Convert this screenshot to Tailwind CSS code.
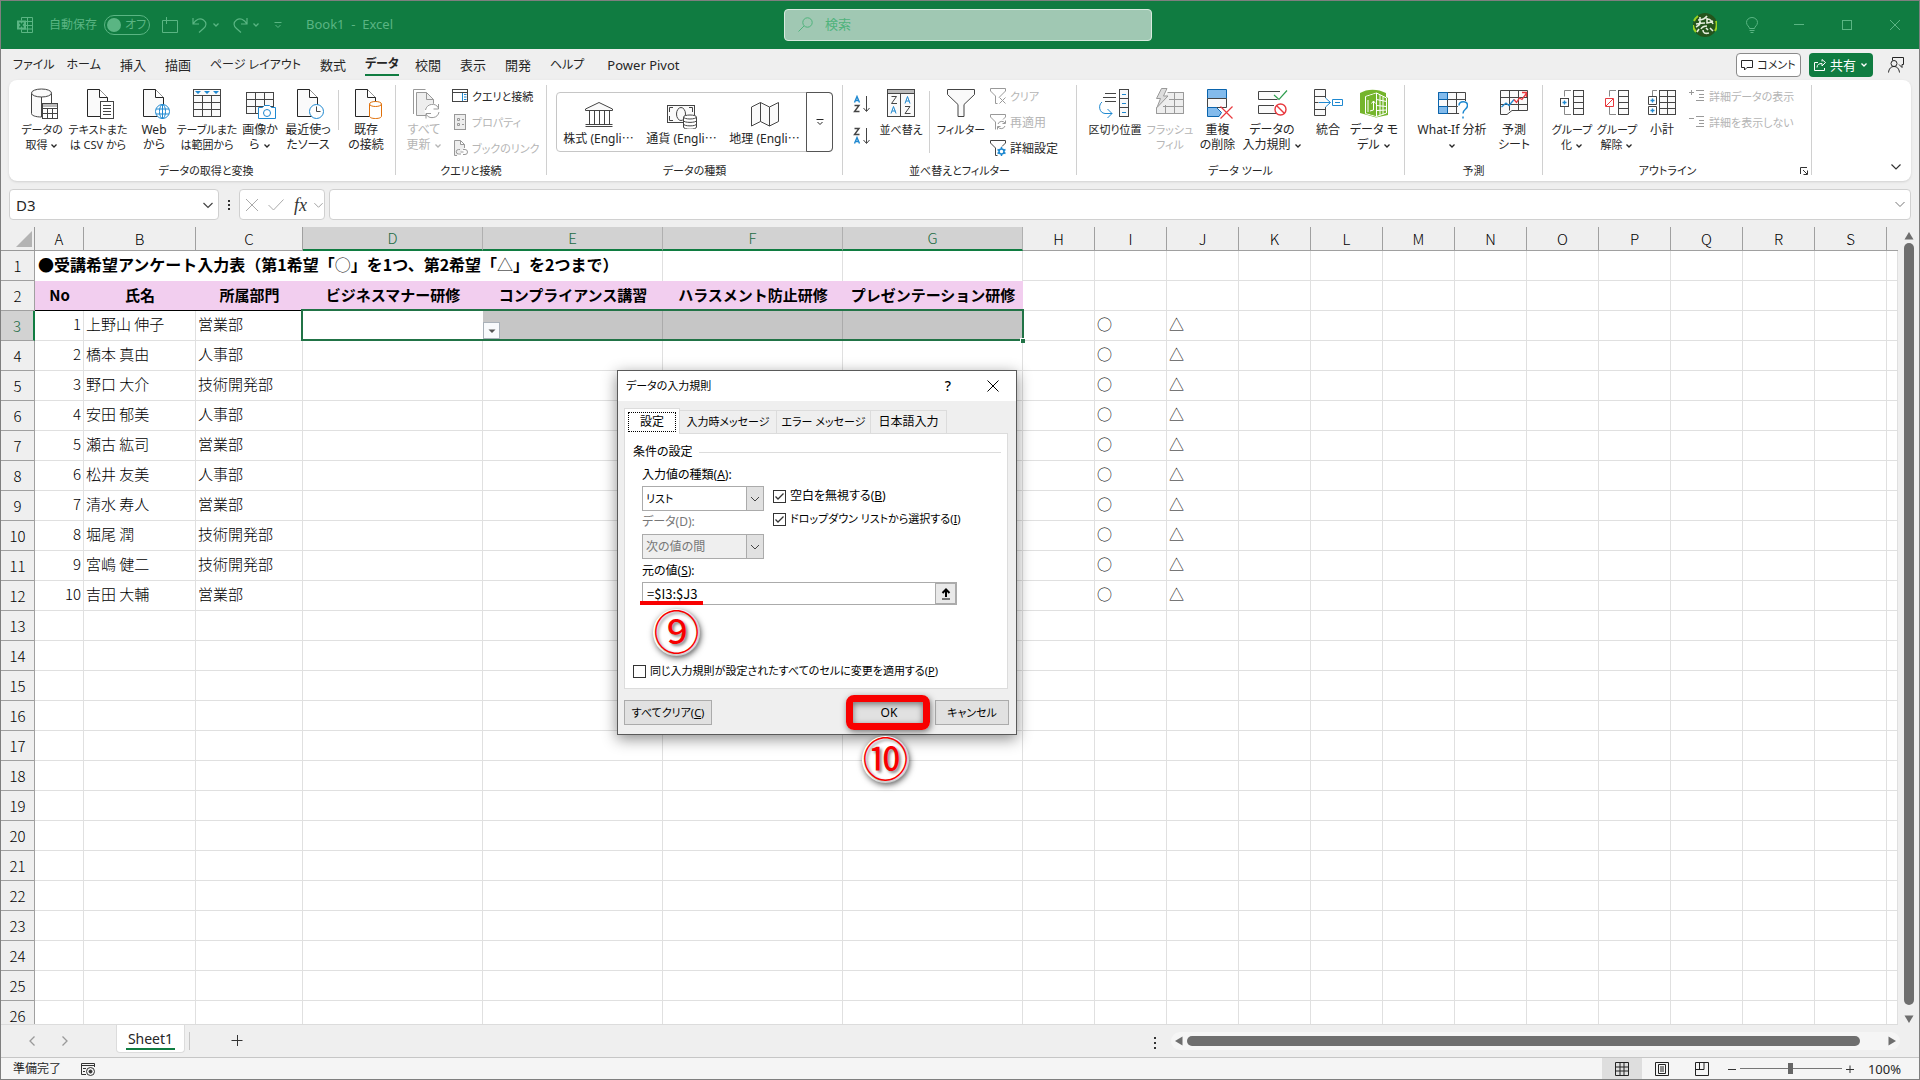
<!DOCTYPE html>
<html lang="ja">
<head>
    <meta charset="UTF-8">
    <meta name="viewport" content="width=device-width, initial-scale=1.0">
    <title>Book1 - Excel</title>
    <script src="https://cdn.jsdelivr.net/npm/@tailwindcss/browser@4"></script>
</head>
<body class="flex h-screen flex-col overflow-hidden border border-[#7f7f7f] bg-[#efefef] font-['Noto_Sans','Noto_Sans_CJK_JP',sans-serif] text-xs text-[#262626] [font-feature-settings:'palt']">

    <!-- Shared icon shapes -->
    <svg class="hidden" aria-hidden="true">
        <symbol id="chev" viewBox="0 0 8 8"><path d="M1.5 2.5 4 5l2.5-2.5" fill="none" stroke="currentColor" stroke-width="1.3"/></symbol>
        <symbol id="doc" viewBox="0 0 32 32"><path d="M5.5 1.5h12l8 8v19h-20z" fill="#fafafa" stroke="currentColor"/><path d="M17.5 1.5v8h8" fill="#fff" stroke="currentColor"/></symbol>
    </svg>

    <!-- Title bar -->
    <header class="flex h-12 shrink-0 items-center bg-[#107c41] text-[#5ab583]">
        <div class="flex flex-1 items-center pl-4">
            <svg class="h-4 w-4" viewBox="0 0 16 16" fill="none" stroke="currentColor"><path d="M4.500 3.500v-3h11v15h-11v-3M10.500.5v15M4 4.500h11.500M8 8.500h7.500M4 12h11.500"/><rect x="0" y="3.500" width="9" height="9" fill="currentColor" stroke="none"/><path d="m2.500 5.500 4 5m0-5-4 5" stroke="#107c41" stroke-width="1.500"/></svg>
            <span class="ml-4 w-12 whitespace-nowrap">自動保存</span>
            <button type="button" aria-label="自動保存 オフ" class="ml-[7px] flex h-5 w-[46px] items-center gap-1 rounded-full border border-current px-0.5"><span class="h-3.5 w-3.5 rounded-full bg-current"></span><span>オフ</span></button>
            <button type="button" aria-label="新しいウィンドウ" class="ml-3"><svg class="h-4 w-4" viewBox="0 0 16 16" fill="none" stroke="currentColor"><path d="M8 3.500h7.500v12H.5v-12H2M4.500 0v7M1 3.500h7"/></svg></button>
            <button type="button" aria-label="元に戻す" class="ml-3.5 flex items-center gap-1"><svg class="h-4 w-4" viewBox="0 0 16 16" fill="none" stroke="currentColor" stroke-width="1.200"><path d="M1 1v6h6M1 7C4 2 8 .5 11.500 3s3 6 0 8.500L7 15.500"/></svg><svg class="h-2 w-2"><use href="#chev"/></svg></button>
            <button type="button" aria-label="やり直し" class="ml-3 flex items-center gap-1"><svg class="h-4 w-4" viewBox="0 0 16 16" fill="none" stroke="currentColor" stroke-width="1.200"><path d="M15 1v6H9M15 7C12 2 8 .5 4.500 3s-3 6 0 8.500L9 15.500"/></svg><svg class="h-2 w-2"><use href="#chev"/></svg></button>
            <button type="button" aria-label="クイック アクセス ツール バー" class="ml-3.5"><svg class="h-2 w-2" viewBox="0 0 8 8" fill="none" stroke="currentColor"><path d="M.5 1.500h7M1.500 4 4 6.500 6.500 4"/></svg></button>
            <h1 class="ml-6 text-[13px] whitespace-pre">Book1  -  Excel</h1>
        </div>
        <div class="flex h-8 w-[368px] items-center gap-3 rounded border border-[#d8eadf] bg-[#a0c8b3] px-3">
            <svg class="h-4 w-4 shrink-0" viewBox="0 0 16 16" fill="none" stroke="#4fb37c"><circle cx="10.500" cy="5.500" r="4.700"/><path d="M7 9 1.500 14.500"/></svg>
            <input type="search" aria-label="検索" placeholder="検索" class="w-full bg-transparent text-[13px] outline-none placeholder:text-[#4fb37c]">
        </div>
        <div class="flex flex-1 items-center justify-end">
            <svg class="h-6 w-6" viewBox="0 0 24 24"><circle cx="12" cy="12" r="12" fill="#24541c"/><path d="M1 8a12 12 0 0 1 4-5M0 12a12 12 0 0 0 3 7M23 8a12 12 0 0 1-1 10" fill="none" stroke="#9bd320" stroke-width="2"/><path d="M5 7c5 0 7-1 9-4M7 4v6c0 2-2 3-4 4M3 11c6-1 8-1 9-1m2-5v5c2 0 4-1 6-2M14 6c3 0 4 1 6 5M8 16c1-2 3-3 6-3m-4 4c0 3 2 4 6 3m-3-5 2 2m2-2 3 3M6 16l-2 3" fill="none" stroke="#e4eddd" stroke-width="1.600"/></svg>
            <button type="button" aria-label="ヒント" class="ml-7"><svg class="h-4 w-3.5" viewBox="0 0 14 16" fill="none" stroke="currentColor"><path d="M4.500 11.500c0-2-3-3-3-6a5.500 5 0 0 1 11 0c0 3-3 4-3 6zM4.500 13.500h5M5.500 15.500h3"/></svg></button>
            <button type="button" aria-label="最小化" class="ml-[34px]"><svg class="h-3 w-3" viewBox="0 0 12 12" stroke="currentColor"><path d="M1 5.500h10"/></svg></button>
            <button type="button" aria-label="最大化" class="ml-9"><svg class="h-3 w-3" viewBox="0 0 12 12" fill="none" stroke="currentColor"><rect x="1.500" y="1.500" width="9" height="9"/></svg></button>
            <button type="button" aria-label="閉じる" class="mr-[18px] ml-9"><svg class="h-3 w-3" viewBox="0 0 12 12" stroke="currentColor"><path d="m1 1 10 10M11 1 1 11"/></svg></button>
        </div>
    </header>

    <!-- Ribbon tabs -->
    <nav class="flex h-[31px] shrink-0 items-center pl-3 text-[13px] leading-5 whitespace-nowrap">
        <a href="#" class="mr-3 text-xs leading-5">ファイル</a>
        <a href="#" class="mr-[19px] text-xs leading-5">ホーム</a>
        <a href="#" class="mr-[19px]">挿入</a>
        <a href="#" class="mr-[19px]">描画</a>
        <a href="#" class="mr-[19px] text-xs leading-5">ページ レイアウト</a>
        <a href="#" class="mr-[19px]">数式</a>
        <a href="#" class="mr-4 border-b-2 border-[#107c41] text-xs leading-5 font-bold">データ</a>
        <a href="#" class="mr-[19px]">校閲</a>
        <a href="#" class="mr-[19px]">表示</a>
        <a href="#" class="mr-[19px]">開発</a>
        <a href="#" class="mr-[23px] text-xs leading-5">ヘルプ</a>
        <a href="#">Power Pivot</a>
        <button type="button" class="ml-auto flex h-6 w-[65px] items-center justify-center gap-1 rounded border border-[#8a8a8a] bg-white text-[11px]">
            <svg class="h-3 w-3" viewBox="0 0 12 12" fill="none" stroke="currentColor"><path d="M.5 1.500h11v7H6l-2.500 2.500V8.500h-3z"/></svg>コメント
        </button>
        <button type="button" class="ml-2 flex h-6 w-16 items-center justify-center gap-1 rounded bg-[#107c41] text-[13px] leading-5 text-white">
            <svg class="h-3 w-3" viewBox="0 0 12 12" fill="none" stroke="currentColor"><path d="M4 3.500H.5v8h10V9M3 8.500c0-3 2-4 5-4V7l3.500-3.500L8 .5v2"/></svg>共有<svg class="h-2 w-2"><use href="#chev"/></svg>
        </button>
        <button type="button" aria-label="プレゼンス" class="mr-[15px] ml-[15px]"><svg class="h-4 w-4" viewBox="0 0 16 16" fill="none" stroke="currentColor"><path d="M4.500 3.500v-3h11v7h-1.500v3l-3-3"/><circle cx="6" cy="6.500" r="3"/><path d="M.5 15.500c.5-4 2.500-6 5.500-6s5 2 5.500 6"/></svg></button>
    </nav>

    <!-- Ribbon -->
    <section class="mx-2 flex h-[101px] shrink-0 rounded-lg bg-white leading-[15px] whitespace-nowrap shadow-sm">

        <div class="flex w-[386px] shrink-0 flex-col pl-2">
            <div class="flex h-[83px] items-start pt-2">
                <button type="button" class="flex w-[50px] flex-col items-center gap-0.5">
                    <svg class="h-8 w-8 shrink-0" viewBox="0 0 32 32" fill="none" stroke="#444"><path d="M5.500 5.500v20c0 2 4 3.500 10 3.500V5.500M25.500 5.500V15" fill="#fafafa"/><ellipse cx="15.500" cy="5" rx="10" ry="4" fill="#fafafa"/><rect x="16.500" y="15.500" width="15" height="15" fill="#fff"/><path d="M17 17.500h14" stroke="#bbb" stroke-width="3"/><path d="M16.500 20.500h15m-15 5h15M21.500 20v10m5-10v10"/></svg>
                    <span class="text-[11px] leading-[15px]">データの<br>取得 <svg class="inline h-2 w-2"><use href="#chev"/></svg></span>
                </button>
                <button type="button" class="flex w-[62px] flex-col items-center gap-0.5">
                    <svg class="h-8 w-8 shrink-0" viewBox="0 0 32 32" fill="none" stroke="#444"><use href="#doc"/><rect x="18.500" y="13.500" width="13" height="17" fill="#fff"/><path d="M21 17.500h8m-8 3h8m-8 3h8m-8 3h8"/></svg>
                    <span class="text-[11px] leading-[15px]">テキストまた<br>は CSV から</span>
                </button>
                <button type="button" class="flex w-[50px] flex-col items-center gap-0.5">
                    <svg class="h-8 w-8 shrink-0" viewBox="0 0 32 32" fill="none" stroke="#444"><use href="#doc"/><g stroke="#1e88d0"><circle cx="24.500" cy="23.500" r="7" fill="#fff"/><ellipse cx="24.500" cy="23.500" rx="3" ry="7"/><path d="M18 21h13M18 26h13M24.500 16.500v14"/></g></svg>
                    <span>Web<br>から</span>
                </button>
                <button type="button" class="flex w-[56px] flex-col items-center gap-0.5">
                    <svg class="h-8 w-8 shrink-0" viewBox="0 0 32 32" fill="none" stroke="#444"><rect x="2.500" y="1.500" width="27" height="27" fill="#fafafa"/><path d="M2.500 7.500h27m-27 7h27m-27 7h27M11.500 7.500v21m9-21v21"/><path d="M4 3h6L7 6zm9 0h6l-3 3zm9 0h6l-3 3z" fill="#1e88d0" stroke="none"/></svg>
                    <span class="text-[11px] leading-[15px]">テーブルまた<br>は範囲から</span>
                </button>
                <button type="button" class="flex w-[50px] flex-col items-center gap-0.5">
                    <svg class="h-8 w-8 shrink-0" viewBox="0 0 32 32" fill="none" stroke="#444"><rect x="2.500" y="4.500" width="27" height="21" fill="#fafafa"/><path d="M2.500 11.500h27m-27 7h27M11.500 4.500v21m9-21v21"/><g stroke="#1e88d0" fill="#fff"><path d="M14.500 19.500h4l2-2h5l2 2h4v11h-17z"/><circle cx="23" cy="25" r="3.500"/></g></svg>
                    <span>画像か<br>ら <svg class="inline h-2 w-2"><use href="#chev"/></svg></span>
                </button>
                <button type="button" class="flex w-[46px] flex-col items-center gap-0.5">
                    <svg class="h-8 w-8 shrink-0" viewBox="0 0 32 32" fill="none" stroke="#444"><use href="#doc"/><circle cx="24.500" cy="23.500" r="7" fill="#fff" stroke="#1e88d0"/><path d="M24.500 18.500v5h4"/></svg>
                    <span>最近使っ<br>たソース</span>
                </button>
                <span class="mx-[7px] mt-0.5 h-10 w-px bg-[#d0d0d0]"></span>
                <button type="button" class="flex w-[40px] flex-col items-center gap-0.5">
                    <svg class="h-8 w-8 shrink-0" viewBox="0 0 32 32" fill="none" stroke="#444"><use href="#doc"/><g stroke="#e0700a" fill="#fff"><path d="M19.500 16v12c0 1.500 2 2.500 6 2.500s6-1 6-2.500V16"/><ellipse cx="25.500" cy="16" rx="6" ry="2.500"/></g></svg>
                    <span>既存<br>の接続</span>
                </button>
            </div>
            <h2 class="text-center text-[11px] leading-[15px]">データの取得と変換</h2>
        </div>
        <span class="mt-[5px] h-[90px] w-px bg-[#d0d0d0]"></span>

        <div class="flex w-[150px] shrink-0 flex-col">
            <div class="flex h-[83px] items-start">
                <button type="button" disabled class="mx-1 mt-2 flex w-12 flex-col items-center gap-0.5 text-[#b5b5b5]">
                    <svg class="h-8 w-8 shrink-0" viewBox="0 0 32 32" fill="none" stroke="#999"><path d="M5.500 26V1.500h12"/><path d="M8.500 4.500h10l7 7v16h-17z" fill="#eee"/><path d="M18.500 4.500v7h7"/><circle cx="24" cy="23" r="7.500" fill="#fff" stroke="none"/><path d="M17.500 22a7 7 0 0 1 13-2M30.500 16v5h-5M31 24a7 7 0 0 1-13 2M18 30.500v-5h5"/></svg>
                    <span>すべて<br>更新 <svg class="inline h-2 w-2"><use href="#chev"/></svg></span>
                </button>
                <div class="flex flex-col pt-[3px] text-[11px] leading-[15px]">
                    <button type="button" class="flex h-[26px] items-center gap-1"><svg class="h-4 w-4" viewBox="0 0 16 16" fill="none" stroke="#444"><rect x=".5" y="1.500" width="15" height="12" fill="#fff"/><path d="M.5 4.500h15"/><path d="M10.500 5v8M12 6.500h2.500M12 9h2.500M12 11.500h2.500" stroke="#1e88d0"/></svg>クエリと接続</button>
                    <button type="button" disabled class="flex h-[26px] items-center gap-1 text-[#b5b5b5]"><svg class="h-4 w-4" viewBox="0 0 16 16" fill="none" stroke="#999"><rect x="2.500" y=".5" width="11" height="15" fill="#eee"/><path d="M5.500 4.500h2v2h-2zm0 5h2v2h-2zM10 5.500h2m-2 5h2"/></svg>プロパティ</button>
                    <button type="button" disabled class="flex h-[26px] items-center gap-1 text-[#b5b5b5]"><svg class="h-4 w-4" viewBox="0 0 16 16" fill="none" stroke="#999"><path d="M5 15.500H2.500V.5h6l4 4V8M8.500.5v4h4" fill="#eee"/><path d="M8 9.500H6.500a2 2 0 0 0 0 4.500H9M8.500 12h3M11 9.500h2a2.500 2.500 0 0 1 0 5h-2"/></svg>ブックのリンク</button>
                </div>
            </div>
            <h2 class="text-center text-[11px] leading-[15px]">クエリと接続</h2>
        </div>
        <span class="mt-[5px] h-[90px] w-px bg-[#d0d0d0]"></span>

        <div class="flex w-[295px] shrink-0 flex-col px-[9px]">
            <div class="h-[83px] pt-3">
                <div class="flex h-[60px] rounded border border-[#c6c6c6]">
                    <button type="button" class="flex w-[83px] flex-col items-center gap-0.5 pt-2"><svg class="h-7 w-8" viewBox="0 0 32 28" fill="none" stroke="#444"><path d="M2.500 8 16 1.500 29.500 8v1.500h-27z" fill="#fafafa"/><path d="M6.500 9.500v14m5-14v14m5-14v14m5-14v14m5-14v14M2.500 23.500h27M2.500 25.500h27"/></svg><span>株式 (Engli⋯</span></button>
                    <button type="button" class="flex w-[83px] flex-col items-center gap-0.5 pt-2"><svg class="h-7 w-8" viewBox="0 0 32 28" fill="none" stroke="#444"><rect x="1.500" y="4.500" width="27" height="17" fill="#fafafa"/><path d="M7 6.500H3.500V11M3.500 15v4.500H7M23 6.500h3.500V11"/><ellipse cx="15" cy="13" rx="4.500" ry="6.500"/><path d="M17.500 16v10c0 3 13 3 13 0V16" fill="#fff"/><ellipse cx="24" cy="16" rx="6.500" ry="2" fill="#fff"/><path d="M17.500 19.500c0 2.500 13 2.500 13 0m-13 3.500c0 2.500 13 2.500 13 0"/></svg><span>通貨 (Engli⋯</span></button>
                    <button type="button" class="flex w-[83px] flex-col items-center gap-0.5 pt-2"><svg class="h-7 w-8" viewBox="0 0 32 28" fill="none" stroke="#444"><path d="m2.500 6 9-4.500 9 4.500 9-4.500v19l-9 4.500-9-4.500-9 4.500zM11.500 1.500v19M20.500 6v19" fill="#fafafa"/></svg><span>地理 (Engli⋯</span></button>
                    <button type="button" aria-label="その他" class="-my-px -mr-px flex flex-1 items-center justify-center rounded-r border border-[#555]"><svg class="h-2 w-2" viewBox="0 0 8 8" fill="none" stroke="currentColor"><path d="M.5 1.500h7M1.500 4 4 6.500 6.500 4"/></svg></button>
                </div>
            </div>
            <h2 class="text-center text-[11px] leading-[15px]">データの種類</h2>
        </div>
        <span class="mt-[5px] h-[90px] w-px bg-[#d0d0d0]"></span>

        <div class="flex w-[233px] shrink-0 flex-col">
            <div class="flex h-[83px] items-start pl-[10px]">
                <div class="flex flex-col gap-3.5 pt-[15px]">
                    <button type="button" aria-label="昇順"><svg class="h-[18px] w-[18px]" viewBox="0 0 18 18" fill="none" stroke="#444"><path d="m1.500 7.500 2.500-6 2.500 6M2.500 5.500h3" stroke="#1e88d0" stroke-width="1.400"/><path d="M1.500 10.500h4.500l-4.500 6H6.500" stroke-width="1.400"/><path d="M13.500 1v15M10.500 13l3 3.500 3-3.500"/></svg></button>
                    <button type="button" aria-label="降順"><svg class="h-[18px] w-[18px]" viewBox="0 0 18 18" fill="none" stroke="#444"><path d="m1.500 16.500 2.500-6 2.500 6M2.500 14.500h3" stroke="#1e88d0" stroke-width="1.400"/><path d="M1.500 1.500h4.500l-4.500 6H6.500" stroke-width="1.400"/><path d="M13.500 1v15M10.500 13l3 3.500 3-3.500"/></svg></button>
                </div>
                <button type="button" class="mt-2 ml-1 flex w-[52px] flex-col items-center gap-0.5">
                    <svg class="h-8 w-8 shrink-0" viewBox="0 0 32 32" fill="none" stroke="#444"><rect x="2.500" y="1.500" width="27" height="27" fill="#fafafa"/><rect x="3" y="2" width="26" height="3" fill="#bbb" stroke="none"/><path d="M2.500 5.500h27M15.500 5.500v23M6.500 8.500h5l-5 7h5.500M20 18.500h5l-5 7h5.500"/><path d="m6 25.500 2.500-7 2.500 7m-4-2.500h3.500M20 15.500l2.500-7 2.500 7m-4-2.500h3.500" stroke="#1e88d0"/></svg>
                    <span class="text-[11px] leading-[15px]">並べ替え</span>
                </button>
                <span class="mt-[11px] ml-0.5 h-[62px] w-px bg-[#d0d0d0]"></span>
                <button type="button" class="mt-2 ml-2 flex w-[46px] flex-col items-center gap-0.5">
                    <svg class="h-8 w-8 shrink-0" viewBox="0 0 32 32" stroke="#444"><path d="M2.500 1.500h27v5l-10.500 10v12h-6v-12L2.500 6.500z" fill="#fafafa"/></svg>
                    <span class="text-[11px] leading-[15px]">フィルター</span>
                </button>
                <div class="ml-1.5 flex flex-col pt-[3px]">
                    <button type="button" disabled class="flex h-[26px] items-center gap-1 text-[11px] text-[#b5b5b5]"><svg class="h-4 w-4" viewBox="0 0 16 16" fill="none" stroke="#999"><path d="M.5.5h15V3L9 9.500M.5.5V3l5 5v7.500h2M9.500 9.500l6 6m0-6-6 6"/></svg>クリア</button>
                    <button type="button" disabled class="flex h-[26px] items-center gap-1 text-[#b5b5b5]"><svg class="h-4 w-4" viewBox="0 0 16 16" fill="none" stroke="#999"><path d="M.5.5h15V3L13 5.500M.5.5V3l5 5v7.500M8 10a4 4 0 0 1 7-1M15.500 6.500v3h-3M15 12a4 4 0 0 1-7 1M7.500 15.500v-3h3"/></svg>再適用</button>
                    <button type="button" class="flex h-[26px] items-center gap-1"><svg class="h-4 w-4" viewBox="0 0 16 16" fill="none" stroke="#444"><path d="M.5.5h15V3L12 6.500M.5.5V3l5 5v7.500h2"/><g stroke="#1e88d0"><circle cx="11.500" cy="11.500" r="2.500" stroke-width="1.500"/><path d="M11.500 7v2m0 5v2M7.500 9.500l2 1m4 2 2 1m-8 0 2-1m4-2 2-1" stroke-width="1.500"/></g></svg>詳細設定</button>
                </div>
            </div>
            <h2 class="text-center text-[11px] leading-[15px]">並べ替えとフィルター</h2>
        </div>
        <span class="mt-[5px] h-[90px] w-px bg-[#d0d0d0]"></span>

        <div class="flex w-[327px] shrink-0 flex-col">
            <div class="flex h-[83px] items-start pt-2 pl-2">
                <button type="button" class="flex w-[60px] flex-col items-center gap-0.5">
                    <svg class="h-8 w-8 shrink-0" viewBox="2 0 32 32" fill="none" stroke="#444"><path d="M8 5.500h11M6 9.500h13M8 13.500h11"/><rect x="22.500" y="1.500" width="9" height="27" fill="#fafafa"/><path d="M22.500 10.500h9m-9 9h9"/><path d="M25 6.500h4m-4 9h4m-4 9h4M5 14c-4 3-3 11 3 11.500h7M10.500 21l4.500 4.500-4.500 4.500" stroke="#1e88d0"/></svg>
                    <span class="text-[11px] leading-[15px]">区切り位置</span>
                </button>
                <button type="button" disabled class="flex w-[50px] flex-col items-center gap-0.5 text-[#b5b5b5]">
                    <svg class="h-8 w-8 shrink-0" viewBox="0 0 32 32" fill="none" stroke="#999"><path d="M13.500 4.500h16v21h-27v-6" fill="#eee"/><path d="M2.500 19.500v6h27v-21h-14M15 11.500h14.500M9 18.500h20.500M11.500 17v8.500m9-21v21"/><path d="m7.500.5-5 10h4l-3.500 9L14 8H9.500l3.500-7.500z" fill="#ddd"/></svg>
                    <span class="text-[11px] leading-[15px]">フラッシュ<br>フィル</span>
                </button>
                <button type="button" class="flex w-[45px] flex-col items-center gap-0.5">
                    <svg class="h-8 w-8 shrink-0" viewBox="1 0 32 32" fill="none"><path d="M6.500 1.500h19v9h-19z" fill="#83bbec" stroke="#0a64ad"/><path d="M6.500 10.500h19v9h-19z" fill="#fafafa" stroke="#444"/><path d="M18 28.500H6.500v-9h9l5 5z" fill="#83bbec" stroke="#0a64ad"/><path d="m19.500 18.500 12 12m0-12-12 12" stroke="#e8393e" stroke-width="1.200"/></svg>
                    <span>重複<br>の削除</span>
                </button>
                <button type="button" class="flex w-[64px] flex-col items-center gap-0.5">
                    <svg class="h-8 w-8 shrink-0" viewBox="0 0 32 32" fill="none" stroke="#444"><path d="M24 3.500H2.500v8h19M18 17.500H2.500v8h18" fill="#fafafa"/><path d="m18 7 5 4.500 8-9" stroke="#2f9e4f" stroke-width="1.200"/><circle cx="24.500" cy="21.500" r="5.500" fill="#fff" stroke="#e8393e" stroke-width="1.400"/><path d="m20.500 17.500 8 8" stroke="#e8393e" stroke-width="1.400"/></svg>
                    <span>データの<br>入力規則 <svg class="inline h-2 w-2"><use href="#chev"/></svg></span>
                </button>
                <button type="button" class="flex w-[48px] flex-col items-center gap-0.5">
                    <svg class="h-8 w-8 shrink-0" viewBox="0 0 32 32" fill="none" stroke="#444"><path d="M13.500 10V1.500h-11v26h11V19M2.500 8.500h11m-11 6h4m-4 7h11" fill="#fafafa"/><path d="M7 14.500h11M13.500 10l5 4.500-5 4.500M20.500 11.500h10v6h-10zM23 14.500h5" stroke="#1e88d0"/></svg>
                    <span>統合</span>
                </button>
                <button type="button" class="flex w-[44px] flex-col items-center gap-0.5">
                    <svg class="h-8 w-8 shrink-0" viewBox="0 0 32 32" fill="none"><path d="M2 5C9 .5 20 .5 28 5v4l2 1v17l-12 2.500L2 25z" fill="#75b52c"/><path d="m7.500 8.500 11-3.500 10 5v15l-10 3.500-11-3z" stroke="#fff"/><path d="M18.500 5v23.500M22 7v20.500M25 8.500v18M18.500 11.500l10 2m-10 4 10 1m-10 4 10-.5" stroke="#fff"/><path d="M8 9l10-3.500v22.500L8 25z" fill="#75b52c"/><path d="M10 12v12M15.500 22V13m-2 2.500 2-2.500 2 2.500M15.500 22l-3.500 1" stroke="#fff"/></svg>
                    <span>データ モ<br>デル <svg class="inline h-2 w-2"><use href="#chev"/></svg></span>
                </button>
            </div>
            <h2 class="text-center text-[11px] leading-[15px]">データ ツール</h2>
        </div>
        <span class="mt-[5px] h-[90px] w-px bg-[#d0d0d0]"></span>

        <div class="flex w-[137px] shrink-0 flex-col">
            <div class="flex h-[83px] items-start pt-2 pl-2">
                <button type="button" class="flex w-[78px] flex-col items-center gap-0.5">
                    <svg class="h-8 w-8 shrink-0" viewBox="-2 0 32 32" fill="none" stroke="#444"><path d="M.5 4.500h27v21H.5z" fill="#fafafa"/><path d="M9.500 4.500v21m9-21v21M.5 11.500h27m-27 7h27"/><path d="M.5 4.500h9v7h-9zm0 14h9v7h-9z" fill="#83bbec" stroke="#0a64ad"/><path d="M.5 11.500v7" stroke="#0a64ad"/><path d="M19 13h12v18H22z" fill="#fff" stroke="none"/><path d="M21 17.500c0-5 8.500-5 8.500 0 0 4-4.500 3.500-4.500 8M25 28.500v2" stroke="#1e88d0" stroke-width="1.500"/></svg>
                    <span>What-If 分析<br><svg class="inline h-2 w-2"><use href="#chev"/></svg></span>
                </button>
                <button type="button" class="flex w-[46px] flex-col items-center gap-0.5">
                    <svg class="h-8 w-8 shrink-0" viewBox="0 0 32 32" fill="none" stroke="#444"><path d="M2.500 2.500h27v20H14l-5 4H2.500z" fill="#fafafa"/><path d="M2.500 9.500h27m-27 7h27M11.500 2.500v20m9-20v20"/><path d="m3.500 19 4.500-4 3 2.500 5-6" stroke="#1e88d0" stroke-width="1.300"/><path d="m16 11.500 2.500 3 3-4.500 2.500 1.500L29 4.500M24 4.500h4.500V9" stroke="#e8393e" stroke-width="1.300"/></svg>
                    <span>予測<br>シート</span>
                </button>
            </div>
            <h2 class="text-center text-[11px] leading-[15px]">予測</h2>
        </div>
        <span class="mt-[5px] h-[90px] w-px bg-[#d0d0d0]"></span>

        <div class="flex w-[268px] shrink-0 flex-col">
            <div class="flex h-[83px] items-start pl-[6px]">
                <button type="button" class="mt-2 flex w-[46px] flex-col items-center gap-0.5">
                    <svg class="h-8 w-8 shrink-0" viewBox="0 0 32 32" fill="none" stroke="#444"><path d="M15 2.500H8.500v6M8.500 19v7.500H15" stroke="#888"/><rect x="4.500" y="10.500" width="8" height="8" fill="#fff"/><path d="M6.500 14.500h4M8.500 12.500v4" stroke="#1e88d0" stroke-width="1.400"/><rect x="17.500" y="2.500" width="10" height="24" fill="#fafafa"/><path d="M17.500 8.500h10m-10 6h10m-10 6h10"/></svg>
                    <span class="text-[11px] leading-[15px]">グループ<br>化 <svg class="inline h-2 w-2"><use href="#chev"/></svg></span>
                </button>
                <button type="button" class="mt-2 flex w-[44px] flex-col items-center gap-0.5">
                    <svg class="h-8 w-8 shrink-0" viewBox="0 0 32 32" fill="none" stroke="#444"><path d="M15 2.500H8.500v6M8.500 19v7.500H15" stroke="#888"/><path d="M4.500 10.500h8v8h-8zM5 18l7-7" stroke="#e8393e"/><rect x="17.500" y="2.500" width="10" height="24" fill="#fafafa"/><path d="M17.500 8.500h10m-10 6h10m-10 6h10"/></svg>
                    <span class="text-[11px] leading-[15px]">グループ<br>解除 <svg class="inline h-2 w-2"><use href="#chev"/></svg></span>
                </button>
                <button type="button" class="mt-2 flex w-[46px] flex-col items-center gap-0.5">
                    <svg class="h-8 w-8 shrink-0" viewBox="0 0 32 32" fill="none" stroke="#444"><path d="M11 2.500H6.500v6" stroke="#888"/><path d="M2.500 8.500h8v8h-8zm0 10h8v8h-8z" fill="#fff"/><path d="M4.500 12.500h4M6.500 10.500v4M4.500 22.500h4M6.500 20.500v4" stroke="#1e88d0" stroke-width="1.400"/><rect x="13.500" y="2.500" width="16" height="24" fill="#fafafa"/><path d="M13.500 8.500h16m-16 6h16m-16 6h16M21.500 2.500v24"/></svg>
                    <span>小計</span>
                </button>
                <div class="ml-1 flex flex-col pt-[3px] text-[11px] leading-[15px]">
                    <button type="button" disabled class="flex h-[26px] items-center gap-1 text-[#b5b5b5]"><svg class="h-4 w-4" viewBox="0 0 16 16" fill="none" stroke="#999"><path d="M0 4.500h5M2.500 2v5M7 2.500h8M10 6.500h5M10 9.500h5M7 12.500h8"/></svg>詳細データの表示</button>
                    <button type="button" disabled class="flex h-[26px] items-center gap-1 text-[#b5b5b5]"><svg class="h-4 w-4" viewBox="0 0 16 16" fill="none" stroke="#999"><path d="M0 4.500h5M7 2.500h8M10 6.500h5M10 9.500h5M7 12.500h8"/></svg>詳細を表示しない</button>
                </div>
            </div>
            <div class="flex items-center pr-[3px]">
                <h2 class="flex-1 pr-2 text-center text-[11px] leading-[15px]">アウトライン</h2>
                <button type="button" aria-label="アウトラインの設定"><svg class="h-2 w-2" viewBox="0 0 8 8" fill="none" stroke="#333"><path d="M.5 7V.5H7M3 3l4 4M7.500 3.500v4h-4"/></svg></button>
            </div>
        </div>
        <span class="mt-[5px] h-[90px] w-px bg-[#d0d0d0]"></span>
        <button type="button" aria-label="リボンを折りたたむ" class="mr-[9px] mb-2 ml-auto self-end"><svg class="h-3 w-3" viewBox="0 0 12 12" fill="none" stroke="#333" stroke-width="1.200"><path d="M1.500 3.500 6 8l4.500-4.500"/></svg></button>
    </section>

    <!-- Formula bar -->
    <section class="mx-2 mt-2 mb-[7px] flex h-[31px] shrink-0 items-center">
        <div class="flex h-full w-[210px] items-center rounded border border-[#d0d0d0] bg-white pr-1 pl-1.5">
            <input type="text" aria-label="名前ボックス" value="D3" class="min-w-0 flex-1 text-[15px] outline-none">
            <svg class="h-3 w-3" viewBox="0 0 12 12" fill="none" stroke="#444" stroke-width="1.200"><path d="m1.500 4 4.500 4.500L10.500 4"/></svg>
        </div>
        <svg class="mx-2 h-3 w-1" viewBox="0 0 4 12" fill="#333"><path d="M1 1h2v2H1zM1 5h2v2H1zM1 9h2v2H1z"/></svg>
        <div class="flex h-full w-[86px] items-center rounded border border-[#d0d0d0] bg-white pl-1.5">
            <button type="button" aria-label="キャンセル"><svg class="h-3 w-3" viewBox="0 0 12 12" stroke="#aaa"><path d="m0 0 12 12M12 0 0 12"/></svg></button>
            <button type="button" aria-label="入力" class="ml-2.5"><svg class="h-3 w-4" viewBox="0 0 16 12" fill="none" stroke="#aaa"><path d="m.5 6 5 5L15.500.5"/></svg></button>
            <button type="button" aria-label="関数の挿入" class="ml-2.5 font-['Liberation_Serif',serif] text-lg leading-5 text-[#333] italic">fx</button>
            <svg class="ml-1.5 h-3 w-3" viewBox="0 0 12 12" fill="none" stroke="#999"><path d="m1.500 4 4.500 4.500L10.500 4"/></svg>
        </div>
        <div class="ml-1 flex h-full flex-1 items-center rounded border border-[#d0d0d0] bg-white px-1">
            <input type="text" aria-label="数式バー" class="min-w-0 flex-1 text-[15px] outline-none">
            <svg class="h-3 w-3" viewBox="0 0 12 12" fill="none" stroke="#777"><path d="m1.500 3 4.500 4.500L10.500 3"/></svg>
        </div>
    </section>

    <!-- Worksheet -->
    <main class="flex min-h-0 flex-1">
        <div class="relative min-w-0 flex-1 overflow-hidden border-b border-[#dcdcdc] bg-white">
            <table class="w-full table-fixed border-separate border-spacing-0 font-['Noto_Sans_CJK_JP',sans-serif] text-[15px] leading-5 text-black [font-feature-settings:normal]">
                <colgroup id="cols">
                    <col class="w-[34px]"><col class="w-[49px]"><col class="w-[112px]"><col class="w-[107px]">
                    <col class="w-[180px]"><col class="w-[180px]"><col class="w-[180px]"><col class="w-[180px]">
                </colgroup>
                <thead><tr id="letters" class="h-6 bg-[#efefef]"></tr></thead>
                <tbody id="rows"></tbody>
            </table>
        </div>
        <div class="flex w-[21px] flex-col items-center pt-[5px] pb-0.5">
            <svg class="h-2 w-2.5 shrink-0" viewBox="0 0 10 8" fill="#6e6e6e"><path d="M5 0 9.500 7.500h-9z"/></svg>
            <div class="mt-[3px] w-2.5 flex-1 rounded-full bg-[#6e6e6e]"></div>
            <svg class="mt-2.5 h-2 w-2.5 shrink-0" viewBox="0 0 10 8" fill="#6e6e6e"><path d="M5 8 .5.5h9z"/></svg>
        </div>
    </main>

    <!-- Sheet tabs -->
    <nav class="flex h-8 shrink-0 items-center">
        <button type="button" aria-label="前のシート" class="ml-[25px]"><svg class="h-3 w-3" viewBox="0 0 12 12" fill="none" stroke="#999" stroke-width="1.300"><path d="M8.500 1.500 4 6l4.500 4.500"/></svg></button>
        <button type="button" aria-label="次のシート" class="ml-[21px]"><svg class="h-3 w-3" viewBox="0 0 12 12" fill="none" stroke="#999" stroke-width="1.300"><path d="M3.500 1.500 8 6l-4.500 4.500"/></svg></button>
        <a href="#" class="ml-[45px] flex h-7 w-[69px] justify-center self-start rounded-b border border-t-0 border-[#dcdcdc] bg-white text-sm leading-[27px]"><span class="h-[25px] border-b-2 border-[#107c41] px-0.5">Sheet1</span></a>
        <span class="ml-1 h-[18px] w-px bg-[#c6c6c6]"></span>
        <button type="button" aria-label="新しいシート" class="ml-[41px]"><svg class="h-3 w-3" viewBox="0 0 12 12" stroke="#333"><path d="M.5 5.500h11M6.500 0v11"/></svg></button>
        <svg class="mt-1 mr-3.5 ml-auto h-3 w-1" viewBox="0 0 4 12" fill="#333"><path d="M1 0h2v2H1zM1 5h2v2H1zM1 10h2v2H1z"/></svg>
        <div class="mr-[19px] flex h-[18px] w-[38%] items-center gap-1 rounded-full bg-[#f5f5f5] px-1">
            <svg class="h-2.5 w-2" viewBox="0 0 8 10" fill="#6e6e6e"><path d="M0 5 7.500.5v9z"/></svg>
            <div class="mr-6 h-2.5 flex-1 rounded-full bg-[#6e6e6e]"></div>
            <svg class="h-2.5 w-2" viewBox="0 0 8 10" fill="#6e6e6e"><path d="M8 5 .5.500v9z"/></svg>
        </div>
    </nav>

    <!-- Status bar -->
    <footer class="flex h-[22px] shrink-0 items-center border-t border-[#c6c6c6] bg-[#f5f5f5] pl-3 text-xs leading-[18px]">
        <span>準備完了</span>
        <svg class="ml-5 h-3.5 w-3.5" viewBox="0 0 14 14" fill="none" stroke="#333"><path d="M5 12.500H.5V1.500h13V5M.5 3.500h13M2 6.500h3M2 9.500h2"/><circle cx="9.500" cy="9.500" r="4"/><circle cx="9.500" cy="9.500" r="1.500" fill="#333"/></svg>
        <button type="button" aria-label="標準" class="ml-auto flex h-full w-10 items-center justify-center bg-[#dedede]"><svg class="h-3.5 w-3.5" viewBox="0 0 14 14" fill="none" stroke="#222"><path d="M.5.5h13v13H.5zM.5 5h13M.5 9h13M5 .5v13M9 .5v13"/></svg></button>
        <button type="button" aria-label="ページ レイアウト" class="flex h-full w-10 items-center justify-center"><svg class="h-3.5 w-3.5" viewBox="0 0 14 14" fill="none" stroke="#222"><path d="M.5.5h13v13H.5zM3.500 2.500h7v9h-7zM5 5h4M5 7h4M5 9h4"/></svg></button>
        <button type="button" aria-label="改ページ プレビュー" class="flex h-full w-10 items-center justify-center"><svg class="h-3.5 w-3.5" viewBox="0 0 14 14" fill="none" stroke="#222"><path d="M.5.5h13v13H.5zM.5 7.500H9V.5M4.500.5v7"/></svg></button>
        <button type="button" aria-label="縮小" class="ml-1.5"><svg class="h-2 w-2" viewBox="0 0 8 8" stroke="#333"><path d="M0 4.500h8"/></svg></button>
        <input type="range" aria-label="ズーム" min="10" max="190" value="100" class="mx-1 h-3 w-[102px] appearance-none bg-transparent [&::-webkit-slider-runnable-track]:h-px [&::-webkit-slider-runnable-track]:bg-[#777] [&::-webkit-slider-thumb]:-mt-[5px] [&::-webkit-slider-thumb]:h-[11px] [&::-webkit-slider-thumb]:w-[5px] [&::-webkit-slider-thumb]:appearance-none [&::-webkit-slider-thumb]:bg-[#666]">
        <button type="button" aria-label="拡大"><svg class="h-2 w-2" viewBox="0 0 8 8" stroke="#333"><path d="M0 4.500h8M4 .5v8"/></svg></button>
        <span class="mr-[18px] ml-3.5 text-[13px]">100%</span>
    </footer>

    <!-- Data validation dialog -->
    <div role="dialog" aria-labelledby="dlgTitle" class="absolute top-[370px] left-[617px] z-20 w-[400px] border border-[#5a5a5a] bg-[#efefef] leading-5 whitespace-nowrap text-black shadow-[0_4px_14px_rgba(0,0,0,0.45)]">
        <div class="flex h-[30px] items-center bg-white pl-2">
            <h2 id="dlgTitle" class="text-[11px]">データの入力規則</h2>
            <button type="button" aria-label="ヘルプ" class="ml-auto w-3 text-sm font-medium">?</button>
            <button type="button" aria-label="閉じる" class="mr-[17px] ml-[33px]"><svg class="h-3 w-3" viewBox="0 0 12 12" stroke="#000"><path d="m.5.5 11 11m0-11-11 11"/></svg></button>
        </div>
        <div class="flex items-end px-1.5 pt-[7px] text-[11px]">
            <button type="button" class="z-10 -mb-px h-[26px] w-[56px] border border-b-0 border-[#dcdcdc] bg-white p-[3px] text-xs"><span class="block h-5 border border-dotted border-black leading-[17px]">設定</span></button>
            <button type="button" class="h-[23px] w-[97px] border-t border-r border-[#dcdcdc]">入力時メッセージ</button>
            <button type="button" class="h-[23px] w-[94px] border-t border-r border-[#dcdcdc]">エラー メッセージ</button>
            <button type="button" class="h-[23px] w-[76px] border-t border-r border-[#dcdcdc] text-xs">日本語入力</button>
        </div>
        <div class="mr-2 ml-1.5 border border-[#dcdcdc] bg-white px-2 pt-2 pb-[7px]">
            <div class="flex items-center gap-1.5"><span>条件の設定</span><span class="-mr-0.5 h-px flex-1 bg-[#dcdcdc]"></span></div>
            <div class="pl-[9px]">
                <label for="allow" class="block h-6 pt-[3px]">入力値の種類(<u>A</u>):</label>
                <div class="flex gap-[9px]">
                    <div>
                        <div class="flex h-[25px] w-[122px] border border-[#ababab] bg-white">
                            <select id="allow" class="min-w-0 flex-1 appearance-none pl-[3px] text-[11px] outline-none"><option>リスト</option></select>
                            <span class="flex w-[17px] items-center justify-center border-l border-[#ababab] bg-[#e1e1e1]"><svg class="h-2.5 w-2.5" viewBox="0 0 10 10" fill="none" stroke="#444"><path d="m1 3 4 4 4-4"/></svg></span>
                        </div>
                        <label for="data" class="block h-[23px] pt-px text-[#777]">データ(D):</label>
                        <div class="flex h-[25px] w-[122px] border border-[#ababab] bg-[#efefef]">
                            <select id="data" disabled class="min-w-0 flex-1 appearance-none pl-[3px] text-[#777] opacity-100 outline-none"><option>次の値の間</option></select>
                            <span class="flex w-[17px] items-center justify-center border-l border-[#ababab] bg-[#e1e1e1]"><svg class="h-2.5 w-2.5" viewBox="0 0 10 10" fill="none" stroke="#444"><path d="m1 3 4 4 4-4"/></svg></span>
                        </div>
                    </div>
                    <div class="flex flex-col gap-[3px]">
                        <label class="flex items-center gap-1"><span class="relative h-[13px] w-[13px]"><input type="checkbox" checked class="block h-[13px] w-[13px] appearance-none border border-[#333] bg-white"><svg class="pointer-events-none absolute inset-0 h-[13px] w-[13px]" viewBox="0 0 13 13" fill="none" stroke="#333" stroke-width="1.300"><path d="M2.500 6.500 5 9l5.500-5.500"/></svg></span><span>空白を無視する(<u>B</u>)</span></label>
                        <label class="flex items-center gap-1 text-[11px] leading-5"><span class="relative h-[13px] w-[13px]"><input type="checkbox" checked class="block h-[13px] w-[13px] appearance-none border border-[#333] bg-white"><svg class="pointer-events-none absolute inset-0 h-[13px] w-[13px]" viewBox="0 0 13 13" fill="none" stroke="#333" stroke-width="1.300"><path d="M2.500 6.500 5 9l5.500-5.500"/></svg></span><span>ドロップダウン リストから選択する(<u>I</u>)</span></label>
                    </div>
                </div>
                <label for="source" class="block h-[23px] pt-0.5">元の値(<u>S</u>):</label>
                <div class="flex h-[23px] w-[315px] border border-[#ababab]">
                    <input id="source" type="text" value="=$I3:$J3" class="min-w-0 flex-1 pl-1 font-['Noto_Sans_CJK_JP',sans-serif] text-[13px] leading-4 outline-none">
                    <button type="button" aria-label="範囲の選択" class="flex w-[21px] items-center justify-center border border-[#ababab] bg-[#e9e9e9]"><svg class="h-3 w-3" viewBox="0 0 12 12"><path d="M6 1.500V9M2.500 5 6 1.500 9.500 5" fill="none" stroke="#000" stroke-width="2"/><path d="M2 11h8" stroke="#000"/></svg></button>
                </div>
            </div>
            <label class="mt-14 flex items-center gap-1 text-[11px] leading-5"><input type="checkbox" class="h-[13px] w-[13px] appearance-none border border-[#333] bg-white"><span>同じ入力規則が設定されたすべてのセルに変更を適用する(<u>P</u>)</span></label>
        </div>
        <div class="flex items-center gap-[9px] pt-[11px] pr-[7px] pb-[9px] pl-1.5 text-[11px]">
            <button type="button" class="mr-auto h-[25px] w-[88px] border border-[#ababab] bg-[#e1e1e1]">すべてクリア(<u>C</u>)</button>
            <button type="button" class="h-[25px] w-[74px] border border-[#ababab] bg-[#e1e1e1] text-xs">OK</button>
            <button type="button" class="h-[25px] w-[74px] border border-[#ababab] bg-[#e1e1e1]">キャンセル</button>
        </div>
    </div>

    <!-- Step markers -->
    <div class="absolute top-[601px] left-[640px] z-30 h-1 w-[63px] bg-[#f80000]"></div>
    <div class="absolute top-[609px] left-[653px] z-30 flex h-[47px] w-[47px] items-center justify-center rounded-full bg-white font-['Noto_Sans_CJK_JP',sans-serif] text-[46px] leading-[46px] text-[#f80000] shadow-[1px_2px_6px_rgba(0,0,0,0.6)] [text-shadow:2px_2px_3px_#888]"><span class="-mt-2">⑨</span></div>
    <div class="pointer-events-none absolute top-[695px] left-[846px] z-30 h-[35px] w-[84px] rounded-lg border-[7px] border-[#f80000] shadow-[1px_2px_6px_rgba(0,0,0,0.5),inset_0_2px_6px_rgba(0,0,0,0.5)]"></div>
    <div class="absolute top-[736px] left-[862px] z-30 flex h-[47px] w-[47px] items-center justify-center rounded-full bg-white font-['Noto_Sans_CJK_JP',sans-serif] text-[46px] leading-[46px] text-[#f80000] shadow-[1px_2px_6px_rgba(0,0,0,0.6)] [text-shadow:2px_2px_3px_#888]"><span class="-mt-2">⑩</span></div>

    <script>
        const letters = 'ABCDEFGHIJKLMNOPQRS'.split('');
        const headings = ['No', '氏名', '所属部門', 'ビジネスマナー研修', 'コンプライアンス講習', 'ハラスメント防止研修', 'プレゼンテーション研修'];
        const people = [
            ['上野山 伸子', '営業部'], ['橋本 真由', '人事部'], ['野口 大介', '技術開発部'], ['安田 郁美', '人事部'], ['瀬古 紘司', '営業部'],
            ['松井 友美', '人事部'], ['清水 寿人', '営業部'], ['堀尾 潤', '技術開発部'], ['宮嶋 健二', '技術開発部'], ['吉田 大輔', '営業部']
        ];

        // H to S are standard width, the last column takes what is left
        document.getElementById('cols').insertAdjacentHTML('beforeend', '<col class="w-[72px]">'.repeat(12) + '<col>');

        let head = '<th class="border-r border-b border-[#999] pr-0.5"><svg class="ml-auto h-4 w-4" viewBox="0 0 16 16" fill="#b3b3b3"><path d="M16 0v16H0z"/></svg></th>';
        letters.forEach((letter, i) => {
            const selected = i >= 3 && i <= 6;
            head += `<th class="border-r p-0 font-light ${selected ? 'border-b-2 border-r-[#b0b0b0] border-b-[#107c41] bg-[#d2d2d2] text-[#1c6b43]' : 'border-b border-[#a0a0a0]'}">${letter}</th>`;
        });
        document.getElementById('letters').innerHTML = head + '<th class="border-b border-[#a0a0a0]"></th>';

        function cell(r, c) {
            const person = people[r - 3];
            if (r === 1) {
                if (c === 0) return '<td class="p-0 pb-1 pl-[3px] text-base leading-5 font-bold whitespace-nowrap">●受講希望アンケート入力表（第1希望「<span class="font-light">○</span>」を1つ、第2希望「<span class="font-light">△</span>」を2つまで）</td>';
                return `<td class="border-r p-0 ${c < 4 ? 'border-transparent' : 'border-[#e0e0e0]'} ${c < 7 ? '' : 'border-b'}"></td>`;
            }
            if (r === 2 && c < 7) return `<th class="border-b bg-[#f2ceef] p-0 pb-0.5 whitespace-nowrap ${c < 3 ? 'border-b-black' : 'border-b-[#217346]'}">${headings[c]}</th>`;
            if (r === 3 && c === 3) return `<td class="relative p-0">
                <div class="pointer-events-none absolute -top-0.5 -left-0.5 z-10 h-8 w-[723px] border-2 border-[#217346]"></div>
                <div class="absolute top-[27px] left-[717px] z-10 h-[5px] w-[5px] border-t border-l border-white bg-[#217346]"></div>
                <button type="button" aria-label="リストから選択" class="absolute top-[11px] left-[180px] z-10 flex h-[17px] w-[17px] items-center justify-center border border-[#a9b1b9] bg-[#f8fafc]"><svg class="h-2 w-2" viewBox="0 0 8 8" fill="#555"><path d="M.5 2.500h7L4 6z"/></svg></button></td>`;
            if (r === 3 && c > 3 && c < 7) return '<td class="border-r border-[#ababab] bg-[#c6c6c6] p-0"></td>';
            let text = '';
            if (person) text = { 0: r - 2, 1: person[0], 2: person[1], 8: '○', 9: '△' }[c] || '';
            return `<td class="border-r border-b border-[#e0e0e0] px-0.5 pt-0 pb-1 font-light whitespace-nowrap ${c === 0 ? 'text-right' : ''}">${text}</td>`;
        }

        let body = '';
        for (let r = 1; r <= 26; r++) {
            body += `<tr class="h-[30px]"><th class="p-0 pt-px font-light ${r === 3 ? 'border-r-2 border-b border-r-[#107c41] border-b-[#a0a0a0] bg-[#d2d2d2] text-[#1c6b43]' : 'border-r border-b border-[#a0a0a0] bg-[#efefef]'}">${r}</th>`;
            for (let c = 0; c < 20; c++) body += cell(r, c);
            body += '</tr>';
        }
        document.getElementById('rows').innerHTML = body;
    </script>
</body>
</html>
